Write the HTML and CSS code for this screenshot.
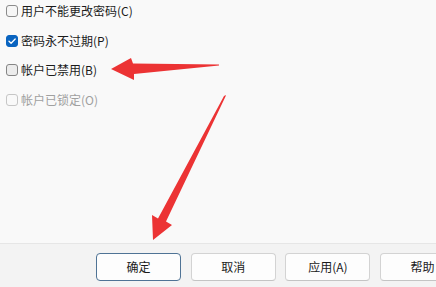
FILE: index.html
```html
<!DOCTYPE html>
<html lang="zh-CN">
<head>
<meta charset="utf-8">
<link rel="stylesheet" href="styles.css">
</head>
<body>
<div class="page">
  <div class="content">
    <label class="row"><span class="box"></span><span class="label">用户不能更改密码(C)</span></label>
    <label class="row"><span class="box checked"><svg viewBox="0 0 12 12" width="12" height="12"><path d="M3 6.2 L5.1 8.3 L9.2 4" fill="none" stroke="#fff" stroke-width="1.3" stroke-linecap="round" stroke-linejoin="round"/></svg></span><span class="label">密码永不过期(P)</span></label>
    <label class="row"><span class="box hover"></span><span class="label">帐户已禁用(B)</span></label>
    <label class="row disabled"><span class="box"></span><span class="label">帐户已锁定(O)</span></label>
  </div>
  <div class="footer">
    <button class="btn default">确定</button>
    <button class="btn">取消</button>
    <button class="btn">应用(A)</button>
    <button class="btn">帮助</button>
  </div>
  <svg class="arrows" viewBox="0 0 436 287" width="436" height="287">
    <polygon fill="#ec3334" points="111,69 131,58 133,63.5 219,64.6 219,65.6 134,74 134,80"/>
    <polygon fill="#ec3334" points="226,95 225.5,96.5 166,221.5 172,225 153,240 152,215 158,218.5 224,96"/>
  </svg>
</div>
</body>
</html>
```

FILE: styles.css
```css
* { box-sizing: border-box; }
html, body { margin: 0; padding: 0; }
body {
  width: 436px;
  height: 287px;
  overflow: hidden;
  background: #f9f9f9;
  font-family: "Noto Sans CJK SC", "Noto Sans", sans-serif;
  font-size: 12px;
  color: #1b1b1b;
}
.page {
  position: relative;
  width: 436px;
  height: 287px;
  display: flex;
  flex-direction: column;
}
.content {
  height: 243px;
  padding: 5px 0 0 6px;
  display: flex;
  flex-direction: column;
  gap: 17.6px;
}
.row {
  display: flex;
  align-items: center;
  height: 12px;
}
.box {
  width: 12px;
  height: 12px;
  border: 1px solid #8b8b8b;
  border-radius: 3px;
  background: #f6f6f6;
  margin-right: 3px;
  flex: none;
  display: flex;
}
.box.hover { background: #ececec; border-color: #858585; }
.box.checked {
  background: #0a64c0;
  border-color: #0a64c0;
}
.box.checked svg { margin: -1px; }
.label { line-height: 12px; white-space: nowrap; }
.row.disabled .box { border-color: #c6c6c6; background: #f9f9f9; }
.row.disabled .label { color: #a0a0a0; }
.footer {
  flex: 1;
  background: #f3f3f3;
  border-top: 1px solid #e6e6e6;
  padding: 9px 0 0 96px;
  display: flex;
  gap: 9.7px;
  overflow: hidden;
  white-space: nowrap;
}
.btn {
  flex: none;
  width: 85px;
  height: 28px;
  border: 1px solid #d3d3d3;
  border-bottom-color: #c4c4c4;
  border-radius: 4px;
  background: #fdfdfd;
  font-family: "Noto Sans CJK SC", "Noto Sans", sans-serif;
  font-size: 12px;
  color: #1b1b1b;
  padding: 0;
  line-height: 26px;
}
.btn.default {
  border-color: #4f7395;
  background: #fdfdfd;
}
.arrows {
  position: absolute;
  left: 0;
  top: 0;
  pointer-events: none;
}
```
